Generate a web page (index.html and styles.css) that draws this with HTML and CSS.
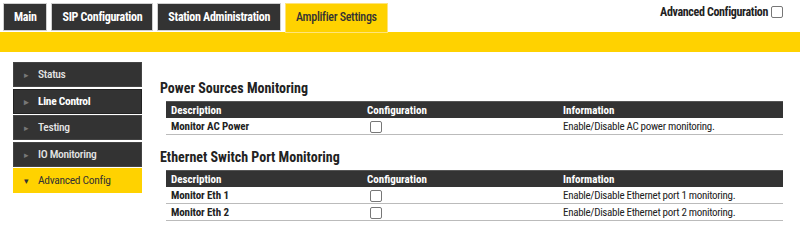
FILE: index.html
```html
<!DOCTYPE html>
<html lang="en">

<head>
    <meta charset="UTF-8">
    <title>Amplifier Settings</title>
    <link rel="stylesheet" href="styles.css">
</head>

<body>
    <div class="top">
        <div class="tabs">
            <div class="tab">Main</div>
            <div class="tab">SIP Configuration</div>
            <div class="tab">Station Administration</div>
            <div class="tab active">Amplifier Settings</div>
        </div>
        <label class="adv">Advanced Configuration <span class="box"></span></label>
    </div>
    <div class="bar"></div>

    <div class="page">
        <ul class="side">
            <li><span class="arrow">&#9656;</span>Status</li>
            <li class="hover"><span class="arrow">&#9656;</span>Line Control</li>
            <li><span class="arrow">&#9656;</span>Testing</li>
            <li><span class="arrow">&#9656;</span>IO Monitoring</li>
            <li class="current"><span class="arrow">&#9662;</span>Advanced Config</li>
        </ul>

        <div class="content">
            <h2>Power Sources Monitoring</h2>
            <table>
                <tr>
                    <th class="c1">Description</th>
                    <th class="c2">Configuration</th>
                    <th>Information</th>
                </tr>
                <tr>
                    <td class="name">Monitor AC Power</td>
                    <td><span class="box"></span></td>
                    <td>Enable/Disable AC power monitoring.</td>
                </tr>
            </table>

            <h2>Ethernet Switch Port Monitoring</h2>
            <table>
                <tr>
                    <th class="c1">Description</th>
                    <th class="c2">Configuration</th>
                    <th>Information</th>
                </tr>
                <tr>
                    <td class="name">Monitor Eth 1</td>
                    <td><span class="box"></span></td>
                    <td>Enable/Disable Ethernet port 1 monitoring.</td>
                </tr>
                <tr>
                    <td class="name">Monitor Eth 2</td>
                    <td><span class="box"></span></td>
                    <td>Enable/Disable Ethernet port 2 monitoring.</td>
                </tr>
            </table>
        </div>
    </div>
</body>

</html>
```

FILE: styles.css
```css
body {
    margin: 0;
    font-family: "Roboto Condensed", Roboto, "Liberation Sans", sans-serif;
    color: #222;
    background: #fff;
}

.top {
    display: flex;
    justify-content: space-between;
    align-items: flex-start;
    padding: 3px 17px 0 3px;
    height: 29px;
}

.tabs {
    display: flex;
    gap: 4px;
}

.tab {
    height: 26px;
    line-height: 26px;
    padding: 0 10px;
    background: #333;
    color: #fff;
    font-size: 12px;
    letter-spacing: -0.3px;
    font-weight: bold;
    border: 1px solid #d0d0d0;
}

.tab.active {
    background: #ffd200;
    color: #333;
    font-weight: 500;
    border-color: #ffe47a;
    height: 28px;
}

.adv {
    display: flex;
    align-items: center;
    gap: 3px;
    margin-top: 2px;
    font-size: 12px;
    letter-spacing: -0.35px;
    font-weight: bold;
    color: #222;
}

.box {
    display: inline-block;
    width: 10px;
    height: 10px;
    border: 1px solid #777;
    border-radius: 2px;
    background: #fff;
}

.bar {
    height: 20px;
    background: #ffd200;
}

.page {
    display: flex;
    padding: 10px 0 0 13px;
}

.side {
    list-style: none;
    margin: 0;
    padding: 0;
    width: 129px;
}

.side li {
    height: 23px;
    line-height: 23px;
    margin-bottom: 1.5px;
    background: #333;
    color: #e4e4e4;
    font-size: 11.5px;
    font-weight: 500;
    letter-spacing: -0.3px;
    border: 1px solid #444;
}

.side li.hover {
    color: #fff;
    font-weight: bold;
    border-color: #222;
}

.side li.current {
    background: #ffd200;
    color: #333;
    font-weight: normal;
    border-color: #ffd200;
}

.arrow {
    display: inline-block;
    width: 24px;
    text-align: center;
    font-size: 9px;
    color: #777;
}

.current .arrow {
    color: #333;
}

.content {
    margin-left: 18px;
    width: 623px;
}

h2 {
    margin: 14px 0 5px;
    font-size: 14px;
    font-weight: bold;
}

h2:first-child {
    margin-top: 18px;
}

table {
    margin-left: 6px;
    width: 617px;
    border-collapse: collapse;
    font-size: 11px;
}

th {
    background: #333;
    color: #fff;
    text-align: left;
    height: 16px;
    padding: 0 5px;
    border-top: 1px solid #555;
}

.c1,
.c2 {
    width: 186px;
}

td {
    height: 16px;
    padding: 0 5px;
    letter-spacing: -0.3px;
    border-bottom: 1px solid #bbb;
}

td .box {
    vertical-align: middle;
    margin-left: 3px;
}

td.name {
    font-weight: bold;
    letter-spacing: -0.1px;
}
```
